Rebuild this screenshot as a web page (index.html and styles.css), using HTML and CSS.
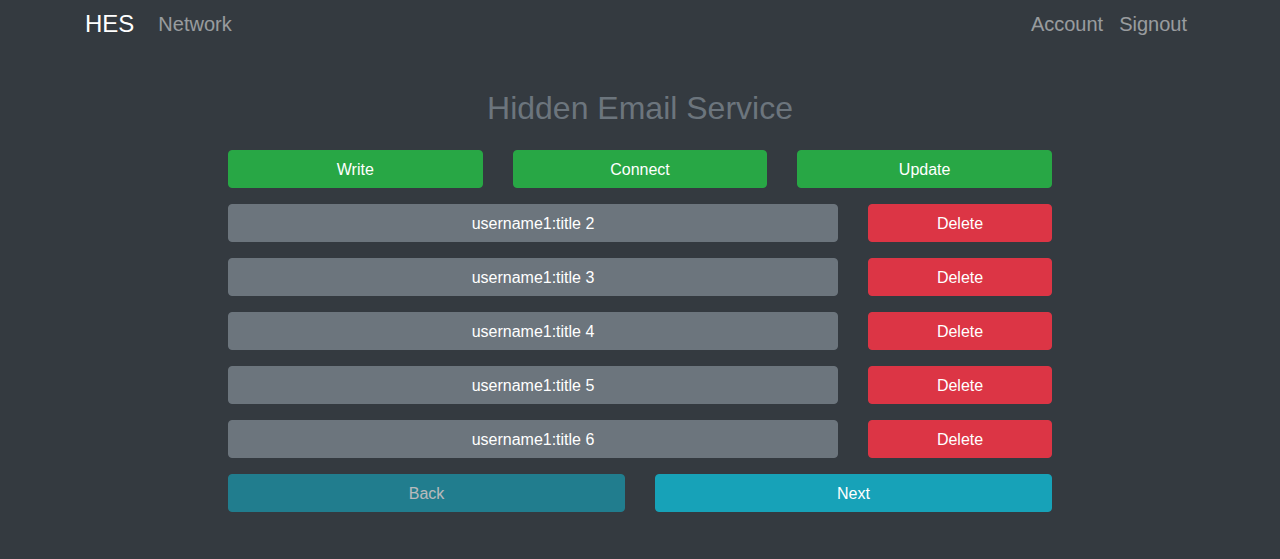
FILE: index.html
```html
<!DOCTYPE html>
<html lang="en">
<head>
<meta charset="utf-8">
<title>Hidden Email Service</title>
<link rel="stylesheet" href="styles.css">
</head>
<body>
<nav class="navbar">
  <div class="nav-left">
    <a class="brand" href="#">HES</a>
    <a class="nav-link" href="#">Network</a>
  </div>
  <div class="nav-right">
    <a class="nav-link" href="#">Account</a>
    <a class="nav-link" href="#">Signout</a>
  </div>
</nav>
<main class="main">
  <h2 class="title">Hidden Email Service</h2>
  <div class="panel">
    <div class="row row-3">
      <button class="btn btn-success">Write</button>
      <button class="btn btn-success">Connect</button>
      <button class="btn btn-success">Update</button>
    </div>
    <div class="row row-mail">
      <button class="btn btn-secondary">username1:title 2</button>
      <button class="btn btn-danger">Delete</button>
    </div>
    <div class="row row-mail">
      <button class="btn btn-secondary">username1:title 3</button>
      <button class="btn btn-danger">Delete</button>
    </div>
    <div class="row row-mail">
      <button class="btn btn-secondary">username1:title 4</button>
      <button class="btn btn-danger">Delete</button>
    </div>
    <div class="row row-mail">
      <button class="btn btn-secondary">username1:title 5</button>
      <button class="btn btn-danger">Delete</button>
    </div>
    <div class="row row-mail">
      <button class="btn btn-secondary">username1:title 6</button>
      <button class="btn btn-danger">Delete</button>
    </div>
    <div class="row row-2">
      <button class="btn btn-info" disabled>Back</button>
      <button class="btn btn-info">Next</button>
    </div>
  </div>
</main>
</body>
</html>
```
FILE: styles.css
```css
html, body {
  margin: 0;
  padding: 0;
}
body {
  background: #343a40;
  font-family: "Liberation Sans", Arial, sans-serif;
  font-size: 16px;
  line-height: 1.5;
  color: #fff;
  min-height: 559px;
}
a {
  text-decoration: none;
}
.navbar {
  height: 48px;
  box-sizing: border-box;
  max-width: 1140px;
  margin: 0 auto;
  padding: 0 15px;
  display: flex;
  align-items: center;
  justify-content: space-between;
}
.nav-left, .nav-right {
  display: flex;
  align-items: center;
}
.brand {
  font-size: 24px;
  line-height: 1.5;
  color: #fff;
  margin-right: 16px;
}
.nav-link {
  font-size: 20px;
  line-height: 1.5;
  color: rgba(255, 255, 255, 0.5);
  padding: 0 8px;
}
.main {
  display: flex;
  flex-direction: column;
  align-items: center;
}
.title {
  margin: 41px 0 23px;
  font-size: 32px;
  font-weight: 400;
  line-height: 1.2;
  color: #6c757d;
}
.panel {
  width: 824px;
  display: flex;
  flex-direction: column;
  gap: 16px;
}
.row {
  display: grid;
  column-gap: 30px;
}
.row-3 {
  grid-template-columns: 1fr 1fr 1fr;
}
.row-mail {
  grid-template-columns: 610px 184px;
}
.row-2 {
  grid-template-columns: 1fr 1fr;
}
.btn {
  font-family: inherit;
  font-size: 16px;
  line-height: 1.5;
  padding: 7px 12px 5px;
  border: 1px solid transparent;
  border-radius: 4px;
  color: #fff;
  text-align: center;
  cursor: pointer;
  height: 38px;
  box-sizing: border-box;
}
.btn-success {
  background: #28a745;
  border-color: #28a745;
}
.btn-secondary {
  background: #6c757d;
  border-color: #6c757d;
}
.btn-danger {
  background: #dc3545;
  border-color: #dc3545;
}
.btn-info {
  background: #17a2b8;
  border-color: #17a2b8;
}
.btn:disabled {
  opacity: 0.65;
  cursor: default;
}
```
